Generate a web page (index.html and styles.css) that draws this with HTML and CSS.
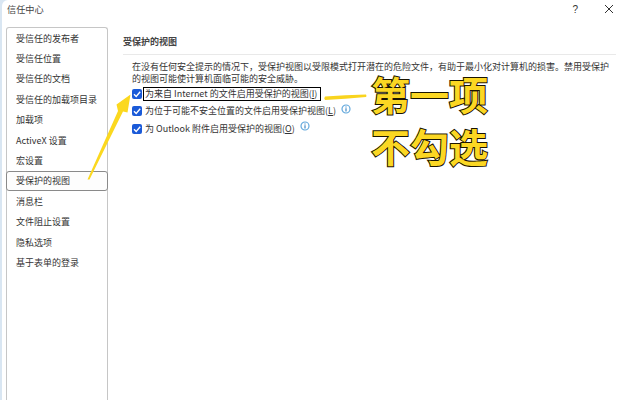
FILE: index.html
```html
<!DOCTYPE html>
<html lang="zh-CN">
<head>
<meta charset="utf-8">
<title>信任中心</title>
<link rel="stylesheet" href="styles.css">
</head>
<body>
<div class="dialog">
  <header class="titlebar">
    <span class="title">信任中心</span>
    <span class="help">?</span>
    <svg class="close" viewBox="0 0 10 10" width="10" height="10"><path d="M1 1L9 9M9 1L1 9" stroke="#333" stroke-width="1" fill="none"/></svg>
  </header>
  <div class="body">
    <nav class="sidebar">
      <div class="item">受信任的发布者</div>
      <div class="item">受信任位置</div>
      <div class="item">受信任的文档</div>
      <div class="item">受信任的加载项目录</div>
      <div class="item">加载项</div>
      <div class="item">ActiveX 设置</div>
      <div class="item">宏设置</div>
      <div class="item selected">受保护的视图</div>
      <div class="item">消息栏</div>
      <div class="item">文件阻止设置</div>
      <div class="item">隐私选项</div>
      <div class="item">基于表单的登录</div>
    </nav>
    <main class="content">
      <h2 class="heading">受保护的视图</h2>
      <div class="section">
        <p class="desc">在没有任何安全提示的情况下，受保护视图以受限模式打开潜在的危险文件，有助于最小化对计算机的损害。禁用受保护的视图可能使计算机面临可能的安全威胁。</p>
        <div class="option">
          <span class="check"><svg viewBox="0 0 10 10" width="10" height="10"><path d="M2 5.2L4.2 7.4L8.2 2.8" stroke="#fff" stroke-width="1.4" fill="none"/></svg></span>
          <span class="label boxed">为来自 Internet 的文件启用受保护的视图(<u>I</u>)</span>
        </div>
        <div class="option">
          <span class="check"><svg viewBox="0 0 10 10" width="10" height="10"><path d="M2 5.2L4.2 7.4L8.2 2.8" stroke="#fff" stroke-width="1.4" fill="none"/></svg></span>
          <span class="label">为位于可能不安全位置的文件启用受保护视图(<u>L</u>)</span>
          <svg class="info" viewBox="0 0 10 10" width="10" height="10"><circle cx="5" cy="5" r="4" fill="#fff" stroke="#62a8dc" stroke-width="1.2"/><path d="M5 4.3V7.4M5 2.5V3.5" stroke="#2f7fc0" stroke-width="1.1"/></svg>
        </div>
        <div class="option">
          <span class="check"><svg viewBox="0 0 10 10" width="10" height="10"><path d="M2 5.2L4.2 7.4L8.2 2.8" stroke="#fff" stroke-width="1.4" fill="none"/></svg></span>
          <span class="label">为 Outlook 附件启用受保护的视图(<u>O</u>)</span>
          <svg class="info" viewBox="0 0 10 10" width="10" height="10"><circle cx="5" cy="5" r="4" fill="#fff" stroke="#62a8dc" stroke-width="1.2"/><path d="M5 4.3V7.4M5 2.5V3.5" stroke="#2f7fc0" stroke-width="1.1"/></svg>
        </div>
      </div>
    </main>
  </div>
</div>
<svg class="marks" viewBox="0 0 628 400" width="628" height="400">
  <path d="M87.5 179.5L118 111L116.5 104.5L130.5 94.5L127.5 112.5L123 111.5L89.5 179.5Z" fill="#fbd81f"/>
  <path d="M325 96.5Q345 95 366 94.5Q367 96 366 97Q345 99 325 100Q323.500 98 325 96.5Z" fill="#f9d41e"/>
</svg>
<div class="callout one">第一项</div>
<div class="callout two">不勾选</div>
</body>
</html>
```
FILE: styles.css
```css
* { box-sizing: border-box; }
html, body { margin: 0; padding: 0; }
body {
  width: 628px;
  height: 400px;
  overflow: hidden;
  position: relative;
  background: #d9e6f2;
  font-family: "Noto Sans CJK SC", "Noto Sans", sans-serif;
  color: #333;
}
.dialog {
  height: 400px;
  margin-left: 2px;
  background: #fff;
  border-top-left-radius: 6px;
  display: flex;
  flex-direction: column;
}
.titlebar {
  height: 27px;
  flex: none;
  display: flex;
  align-items: center;
  padding: 0 14px 9px 5px;
  font-size: 9.2px;
}
.title { flex: 1; color: #444; }
.help { font-size: 10px; margin-right: 26px; font-family: "Liberation Sans", sans-serif; }
.body { flex: 1; display: flex; min-height: 0; }
.sidebar {
  width: 102px;
  margin-left: 4px;
  flex: none;
  border: 1px solid #c6c6c6;
  border-bottom: none;
  border-radius: 3px 3px 0 0;
  display: flex;
  flex-direction: column;
}
.item {
  height: 20.4px;
  flex: none;
  display: flex;
  align-items: center;
  padding-left: 9px;
  font-size: 9px;
  line-height: 1;
  white-space: nowrap;
  margin-left: -1px;
  margin-right: -1px;
  border: 1px solid transparent;
}
.item.selected {
  border-color: #8a8a8a;
  border-radius: 3px;
  background: #fdfdfd;
}
.content { flex: 1; padding: 9px 0 0 15px; min-width: 0; }
.heading {
  margin: 0;
  font-size: 9px;
  line-height: 12px;
  font-weight: 700;
  color: #444;
  padding-bottom: 6px;
  border-bottom: 1px solid #e9e9e9;
  margin-right: 12px;
}
.section { padding: 6px 0 0 9px; }
.desc {
  margin: 0;
  width: 482px;
  font-size: 9px;
  line-height: 12px;
  color: #333;
}
.option { height: 17.5px; display: flex; align-items: center; white-space: nowrap; }
.check {
  width: 10px;
  height: 10px;
  flex: none;
  background: #1a5ad8;
  border-radius: 2px;
  margin-right: 1px;
  display: flex;
}
.label { font-size: 9px; line-height: 12px; padding: 0 1px; border: 1px solid transparent; color: #333; }
.label.boxed { border: 1.5px solid #000; padding-right: 3px; }
.info { margin-left: 3px; margin-top: -5px; }
.marks { position: absolute; left: 0; top: 0; pointer-events: none; }
.callout {
  position: absolute;
  left: 371px;
  font-size: 39px;
  line-height: 44px;
  font-weight: 700;
  color: #fbd723;
  -webkit-text-stroke: 2px #1a1400;
  paint-order: stroke fill;
  white-space: nowrap;
}
.callout.one { top: 71px; }
.callout.two { top: 123px; }
```
